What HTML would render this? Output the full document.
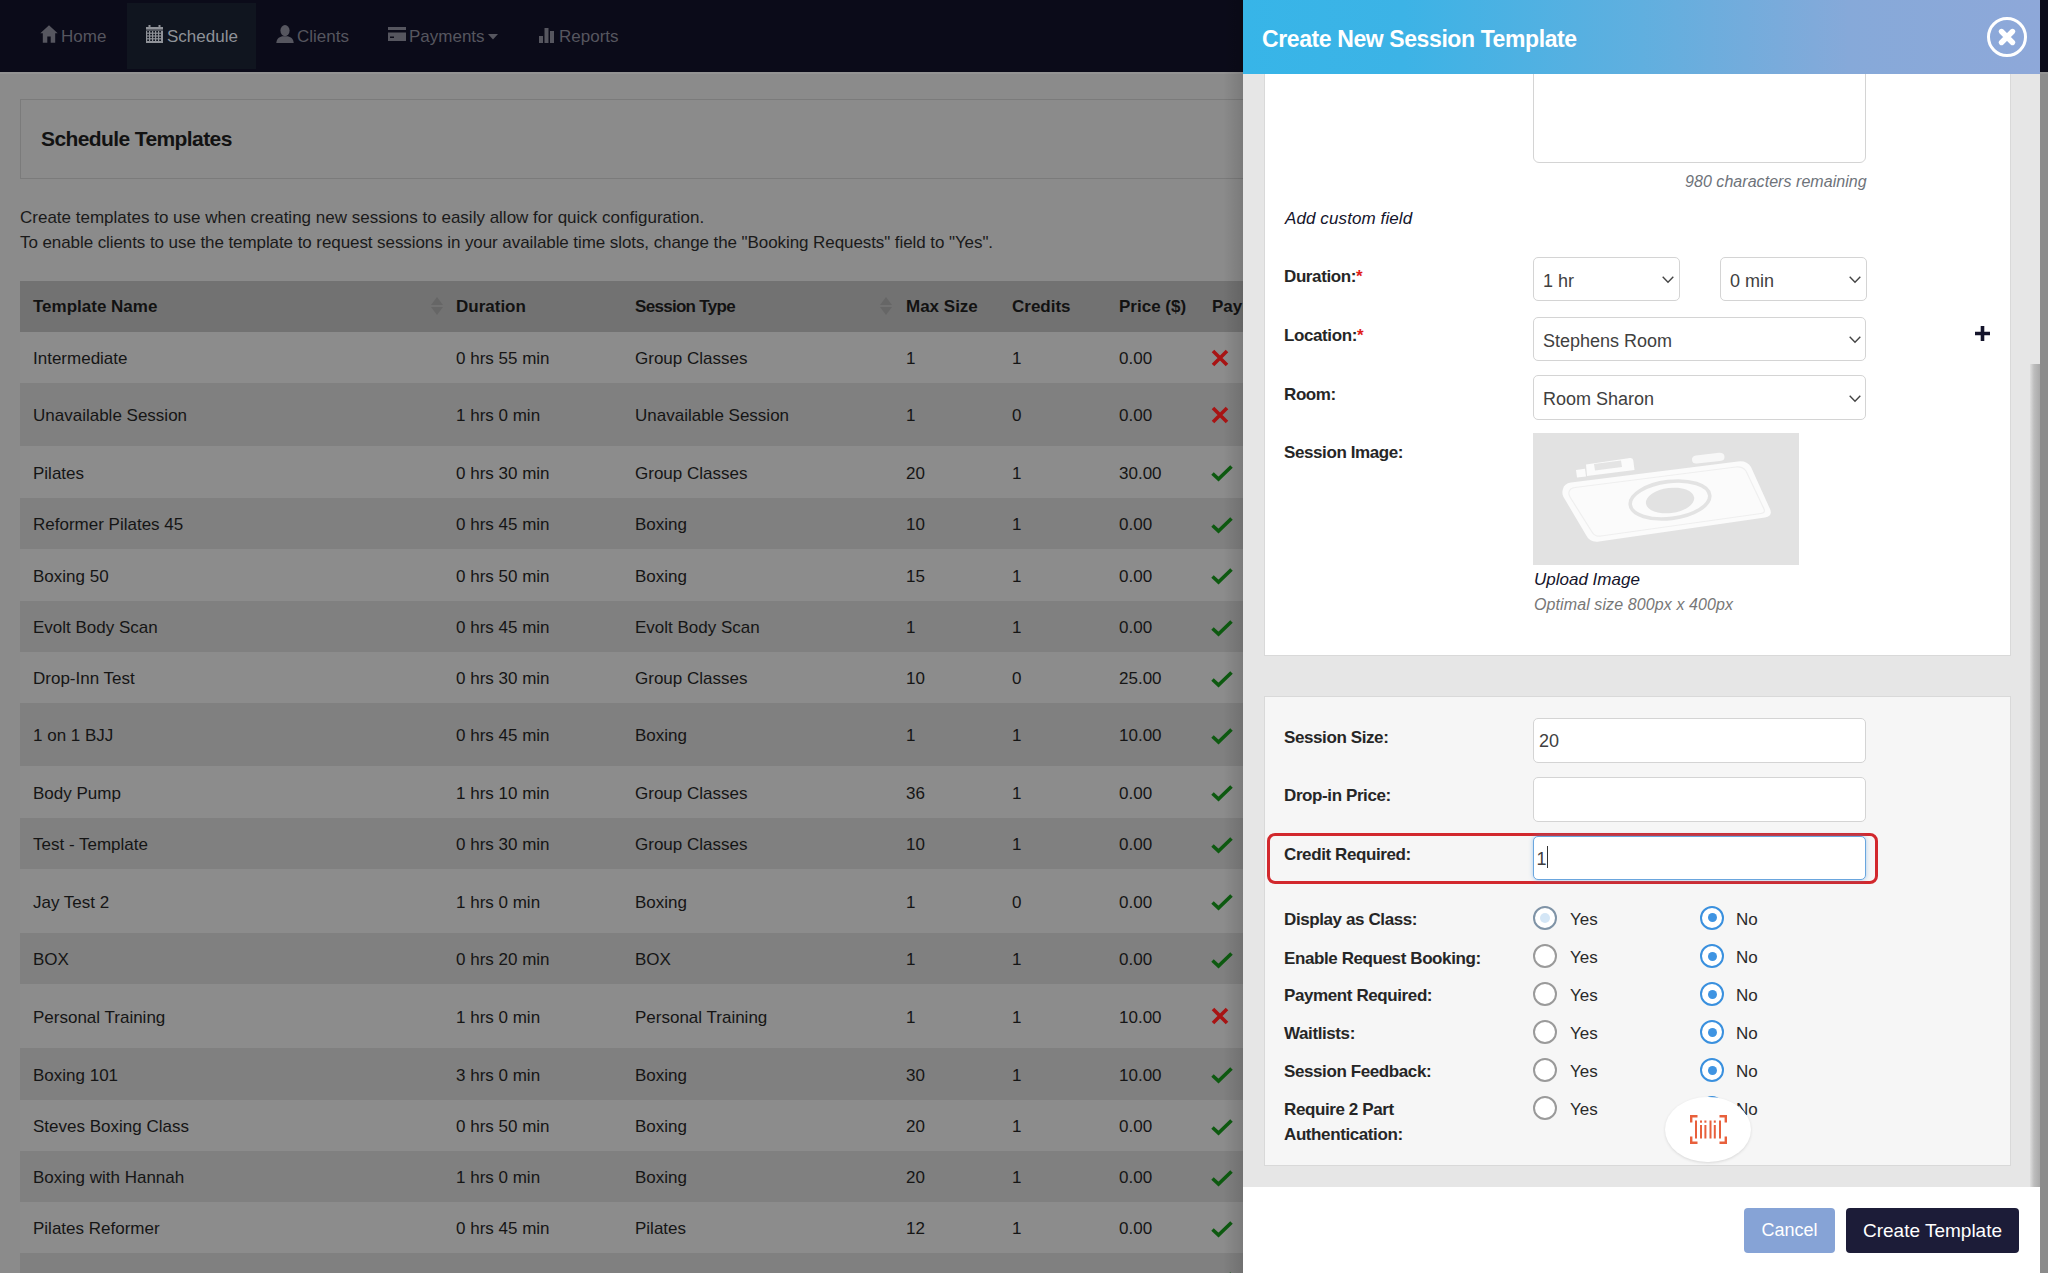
<!DOCTYPE html>
<html><head><meta charset="utf-8"><style>
*{box-sizing:border-box;margin:0;padding:0}
html,body{width:2048px;height:1273px;overflow:hidden;background:#8b8b8b;font-family:"Liberation Sans",sans-serif;position:relative}
.a,.td,.ni,.lbl,.val,.it{position:absolute;white-space:nowrap}
#nav{position:absolute;left:0;top:0;width:2048px;height:72px;background:#0b0b19}
#navact{position:absolute;left:127px;top:3px;width:129px;height:66px;background:#10151f}
#navline{position:absolute;left:0;top:72px;width:2048px;height:2px;background:#939393}
.ni{font-size:17px;line-height:20px;color:#56565f}
.ni.act{color:#8f9298}
.nic{position:absolute}
#panel{position:absolute;left:20px;top:99px;width:1240px;height:80px;border:1px solid #7b7b7b;border-right:none}
.title{font-size:21px;font-weight:bold;line-height:26px;color:#121212;letter-spacing:-0.6px}
.desc{font-size:17px;line-height:20px;color:#1a1a1a}
.trow{position:absolute;left:20px;width:1230px}
.hdr{background:#727272}
.lt{background:#8c8c8c}
.dk{background:#808080}
.td{font-size:17px;line-height:20px;color:#151515}
.th{font-weight:bold;color:#121212}
.sort{position:absolute;width:12px;height:20px}
.sort:before{content:"";position:absolute;left:0;top:0;border-left:6px solid transparent;border-right:6px solid transparent;border-bottom:8px solid #666}
.sort:after{content:"";position:absolute;left:0;top:10px;border-left:6px solid transparent;border-right:6px solid transparent;border-top:8px solid #666}
.ic{position:absolute}
#shadow{position:absolute;left:1223px;top:0;width:20px;height:1273px;background:linear-gradient(90deg,rgba(0,0,0,0),rgba(0,0,0,0.12))}
#modal{position:absolute;left:1243px;top:0;width:797px;height:1273px;background:#e6e6e6;overflow:hidden}
#mhead{position:absolute;left:0;top:0;width:797px;height:74px;background:linear-gradient(90deg,#37b5e8 0%,#3cb3e6 20%,#60afdf 50%,#86a9d9 76%,#8ea8d9 100%)}
#mtitle{position:absolute;left:19px;top:24.5px;font-size:23px;line-height:28px;font-weight:bold;color:#fff;letter-spacing:-0.4px;white-space:nowrap}
#mfoot{position:absolute;left:0;top:1187px;width:797px;height:86px;background:#fff}
.card{position:absolute;left:21px;width:747px}
.lbl{left:41px;font-size:17px;line-height:20px;font-weight:bold;color:#262626;letter-spacing:-0.4px}
.req{color:#e0201a}
.inp{position:absolute;left:290px;width:333px;height:45px;background:#fff;border:1px solid #d4d4d4;border-radius:5px}
.val{font-size:18px;line-height:22px;color:#404040}
.it{font-style:italic;font-size:16px;line-height:20px}
.chev{position:absolute}
.radio{position:absolute;width:24px;height:24px;border-radius:50%;border:2px solid #9a9a9a;background:#fff}
.radio.on{border:2.5px solid #3a90de}
.radio.on:after{content:"";position:absolute;left:50%;top:50%;width:9px;height:9px;margin:-4.5px 0 0 -4.5px;border-radius:50%;background:#3f94e2}
.rl{position:absolute;font-size:17px;line-height:20px;color:#2a2a2a;white-space:nowrap}
.btn{position:absolute;top:1208px;height:45px;border-radius:4px;color:#fff;font-size:19px;line-height:45px;text-align:center;white-space:nowrap}
.radio.pale{border:2.5px solid #7f93a6}
.radio.pale:after{content:"";position:absolute;left:50%;top:50%;width:10px;height:10px;margin:-5px 0 0 -5px;border-radius:50%;background:#d4e6f6}
</style></head><body>
<div id="navline"></div><div id="nav"><div id="navact"></div>
<svg class="nic" style="left:40px;top:25px" width="18" height="18" viewBox="0 0 18 18"><path d="M9 0.3L0.3 8.3H2.8V17.7H7.3V11.5H10.7V17.7H15.2V8.3H17.7Z" fill="#56565f"/></svg>
<div class="ni" style="left:61px;top:26.5px">Home</div>
<svg class="nic" style="left:146px;top:25px" width="17" height="18" viewBox="0 0 17 18"><rect x="0" y="2" width="17" height="16" fill="#8f9298"/><rect x="2.5" y="0" width="2" height="3" fill="#8f9298"/><rect x="12.5" y="0" width="2" height="3" fill="#8f9298"/><g fill="#10151f"><rect x="0" y="4.6" width="17" height="0.9"/><rect x="1.2" y="6.0" width="1.8" height="1.6"/><rect x="4.2" y="6.0" width="1.8" height="1.6"/><rect x="7.2" y="6.0" width="1.8" height="1.6"/><rect x="10.2" y="6.0" width="1.8" height="1.6"/><rect x="13.2" y="6.0" width="1.8" height="1.6"/><rect x="1.2" y="8.8" width="1.8" height="1.6"/><rect x="4.2" y="8.8" width="1.8" height="1.6"/><rect x="7.2" y="8.8" width="1.8" height="1.6"/><rect x="10.2" y="8.8" width="1.8" height="1.6"/><rect x="13.2" y="8.8" width="1.8" height="1.6"/><rect x="1.2" y="11.6" width="1.8" height="1.6"/><rect x="4.2" y="11.6" width="1.8" height="1.6"/><rect x="7.2" y="11.6" width="1.8" height="1.6"/><rect x="10.2" y="11.6" width="1.8" height="1.6"/><rect x="13.2" y="11.6" width="1.8" height="1.6"/><rect x="1.2" y="14.4" width="1.8" height="1.6"/><rect x="4.2" y="14.4" width="1.8" height="1.6"/><rect x="7.2" y="14.4" width="1.8" height="1.6"/><rect x="10.2" y="14.4" width="1.8" height="1.6"/><rect x="13.2" y="14.4" width="1.8" height="1.6"/></g></svg>
<div class="ni act" style="left:167px;top:26.5px">Schedule</div>
<svg class="nic" style="left:276px;top:25px" width="18" height="18" viewBox="0 0 18 18"><ellipse cx="9" cy="5.6" rx="4.6" ry="5.6" fill="#56565f"/><path d="M0.3 18C0.6 14 2.5 12.3 6.2 11.2H11.8C15.5 12.3 17.4 14 17.7 18Z" fill="#56565f"/></svg>
<div class="ni" style="left:297px;top:26.5px">Clients</div>
<svg class="nic" style="left:388px;top:27px" width="18" height="15" viewBox="0 0 18 15"><rect x="0" y="0" width="18" height="14" fill="#56565f"/><rect x="0" y="3" width="18" height="2.5" fill="#0b0b19"/><rect x="2" y="9.5" width="4" height="1.5" fill="#0b0b19"/></svg>
<div class="ni" style="left:409px;top:26.5px">Payments</div>
<svg class="nic" style="left:488px;top:34px" width="10" height="6" viewBox="0 0 10 6"><path d="M0 0H10L5 5.5Z" fill="#56565f"/></svg>
<svg class="nic" style="left:539px;top:27px" width="17" height="16" viewBox="0 0 17 16"><rect x="0" y="9" width="4" height="7" fill="#56565f"/><rect x="5.5" y="1" width="4" height="15" fill="#56565f"/><rect x="11" y="4" width="4" height="12" fill="#56565f"/></svg>
<div class="ni" style="left:559px;top:26.5px">Reports</div>
</div>
<div id="panel"></div>
<div class="a title" style="left:41px;top:125.5px;">Schedule Templates</div>
<div class="a desc" style="left:20px;top:207.5px;">Create templates to use when creating new sessions to easily allow for quick configuration.</div>
<div class="a desc" style="left:20px;top:232.5px;letter-spacing:-0.08px">To enable clients to use the template to request sessions in your available time slots, change the "Booking Requests" field to "Yes".</div>
<div class="trow hdr" style="top:281px;height:51px"></div>
<div class="td th" style="left:33px;top:296.5px;">Template Name</div>
<div class="td th" style="left:456px;top:296.5px;">Duration</div>
<div class="td th" style="left:635px;top:296.5px;letter-spacing:-0.7px">Session Type</div>
<div class="td th" style="left:906px;top:296.5px;">Max Size</div>
<div class="td th" style="left:1012px;top:296.5px;">Credits</div>
<div class="td th" style="left:1119px;top:296.5px;">Price ($)</div>
<div class="td th" style="left:1212px;top:296.5px;">Payment</div>
<div class="sort" style="left:431px;top:297px"></div>
<div class="sort" style="left:880px;top:297px"></div>
<div class="trow lt" style="top:332px;height:51px"></div>
<div class="td" style="left:33px;top:349.0px;">Intermediate</div>
<div class="td" style="left:456px;top:349.0px;">0 hrs 55 min</div>
<div class="td" style="left:635px;top:349.0px;">Group Classes</div>
<div class="td" style="left:906px;top:349.0px;">1</div>
<div class="td" style="left:1012px;top:349.0px;">1</div>
<div class="td" style="left:1119px;top:349.0px;">0.00</div>
<svg class="ic" style="left:1211px;top:349px" width="18" height="18" viewBox="0 0 18 18"><path d="M2 2L16 16M16 2L2 16" stroke="#a81414" stroke-width="3.6" stroke-linecap="butt"/></svg>
<div class="trow dk" style="top:383px;height:63px"></div>
<div class="td" style="left:33px;top:406.0px;">Unavailable Session</div>
<div class="td" style="left:456px;top:406.0px;">1 hrs 0 min</div>
<div class="td" style="left:635px;top:406.0px;">Unavailable Session</div>
<div class="td" style="left:906px;top:406.0px;">1</div>
<div class="td" style="left:1012px;top:406.0px;">0</div>
<div class="td" style="left:1119px;top:406.0px;">0.00</div>
<svg class="ic" style="left:1211px;top:406px" width="18" height="18" viewBox="0 0 18 18"><path d="M2 2L16 16M16 2L2 16" stroke="#a81414" stroke-width="3.6" stroke-linecap="butt"/></svg>
<div class="trow lt" style="top:446px;height:52px"></div>
<div class="td" style="left:33px;top:463.5px;">Pilates</div>
<div class="td" style="left:456px;top:463.5px;">0 hrs 30 min</div>
<div class="td" style="left:635px;top:463.5px;">Group Classes</div>
<div class="td" style="left:906px;top:463.5px;">20</div>
<div class="td" style="left:1012px;top:463.5px;">1</div>
<div class="td" style="left:1119px;top:463.5px;">30.00</div>
<svg class="ic" style="left:1211px;top:464px" width="22" height="18" viewBox="0 0 22 18"><path d="M1.5 9.5L7.5 15L20.5 2.5" fill="none" stroke="#0d5a10" stroke-width="3.6"/></svg>
<div class="trow dk" style="top:498px;height:51px"></div>
<div class="td" style="left:33px;top:515.0px;">Reformer Pilates 45</div>
<div class="td" style="left:456px;top:515.0px;">0 hrs 45 min</div>
<div class="td" style="left:635px;top:515.0px;">Boxing</div>
<div class="td" style="left:906px;top:515.0px;">10</div>
<div class="td" style="left:1012px;top:515.0px;">1</div>
<div class="td" style="left:1119px;top:515.0px;">0.00</div>
<svg class="ic" style="left:1211px;top:516px" width="22" height="18" viewBox="0 0 22 18"><path d="M1.5 9.5L7.5 15L20.5 2.5" fill="none" stroke="#0d5a10" stroke-width="3.6"/></svg>
<div class="trow lt" style="top:549px;height:52px"></div>
<div class="td" style="left:33px;top:566.5px;">Boxing 50</div>
<div class="td" style="left:456px;top:566.5px;">0 hrs 50 min</div>
<div class="td" style="left:635px;top:566.5px;">Boxing</div>
<div class="td" style="left:906px;top:566.5px;">15</div>
<div class="td" style="left:1012px;top:566.5px;">1</div>
<div class="td" style="left:1119px;top:566.5px;">0.00</div>
<svg class="ic" style="left:1211px;top:567px" width="22" height="18" viewBox="0 0 22 18"><path d="M1.5 9.5L7.5 15L20.5 2.5" fill="none" stroke="#0d5a10" stroke-width="3.6"/></svg>
<div class="trow dk" style="top:601px;height:51px"></div>
<div class="td" style="left:33px;top:618.0px;">Evolt Body Scan</div>
<div class="td" style="left:456px;top:618.0px;">0 hrs 45 min</div>
<div class="td" style="left:635px;top:618.0px;">Evolt Body Scan</div>
<div class="td" style="left:906px;top:618.0px;">1</div>
<div class="td" style="left:1012px;top:618.0px;">1</div>
<div class="td" style="left:1119px;top:618.0px;">0.00</div>
<svg class="ic" style="left:1211px;top:619px" width="22" height="18" viewBox="0 0 22 18"><path d="M1.5 9.5L7.5 15L20.5 2.5" fill="none" stroke="#0d5a10" stroke-width="3.6"/></svg>
<div class="trow lt" style="top:652px;height:51px"></div>
<div class="td" style="left:33px;top:669.0px;">Drop-Inn Test</div>
<div class="td" style="left:456px;top:669.0px;">0 hrs 30 min</div>
<div class="td" style="left:635px;top:669.0px;">Group Classes</div>
<div class="td" style="left:906px;top:669.0px;">10</div>
<div class="td" style="left:1012px;top:669.0px;">0</div>
<div class="td" style="left:1119px;top:669.0px;">25.00</div>
<svg class="ic" style="left:1211px;top:670px" width="22" height="18" viewBox="0 0 22 18"><path d="M1.5 9.5L7.5 15L20.5 2.5" fill="none" stroke="#0d5a10" stroke-width="3.6"/></svg>
<div class="trow dk" style="top:703px;height:63px"></div>
<div class="td" style="left:33px;top:726.0px;">1 on 1 BJJ</div>
<div class="td" style="left:456px;top:726.0px;">0 hrs 45 min</div>
<div class="td" style="left:635px;top:726.0px;">Boxing</div>
<div class="td" style="left:906px;top:726.0px;">1</div>
<div class="td" style="left:1012px;top:726.0px;">1</div>
<div class="td" style="left:1119px;top:726.0px;">10.00</div>
<svg class="ic" style="left:1211px;top:727px" width="22" height="18" viewBox="0 0 22 18"><path d="M1.5 9.5L7.5 15L20.5 2.5" fill="none" stroke="#0d5a10" stroke-width="3.6"/></svg>
<div class="trow lt" style="top:766px;height:52px"></div>
<div class="td" style="left:33px;top:783.5px;">Body Pump</div>
<div class="td" style="left:456px;top:783.5px;">1 hrs 10 min</div>
<div class="td" style="left:635px;top:783.5px;">Group Classes</div>
<div class="td" style="left:906px;top:783.5px;">36</div>
<div class="td" style="left:1012px;top:783.5px;">1</div>
<div class="td" style="left:1119px;top:783.5px;">0.00</div>
<svg class="ic" style="left:1211px;top:784px" width="22" height="18" viewBox="0 0 22 18"><path d="M1.5 9.5L7.5 15L20.5 2.5" fill="none" stroke="#0d5a10" stroke-width="3.6"/></svg>
<div class="trow dk" style="top:818px;height:51px"></div>
<div class="td" style="left:33px;top:835.0px;">Test - Template</div>
<div class="td" style="left:456px;top:835.0px;">0 hrs 30 min</div>
<div class="td" style="left:635px;top:835.0px;">Group Classes</div>
<div class="td" style="left:906px;top:835.0px;">10</div>
<div class="td" style="left:1012px;top:835.0px;">1</div>
<div class="td" style="left:1119px;top:835.0px;">0.00</div>
<svg class="ic" style="left:1211px;top:836px" width="22" height="18" viewBox="0 0 22 18"><path d="M1.5 9.5L7.5 15L20.5 2.5" fill="none" stroke="#0d5a10" stroke-width="3.6"/></svg>
<div class="trow lt" style="top:869px;height:64px"></div>
<div class="td" style="left:33px;top:892.5px;">Jay Test 2</div>
<div class="td" style="left:456px;top:892.5px;">1 hrs 0 min</div>
<div class="td" style="left:635px;top:892.5px;">Boxing</div>
<div class="td" style="left:906px;top:892.5px;">1</div>
<div class="td" style="left:1012px;top:892.5px;">0</div>
<div class="td" style="left:1119px;top:892.5px;">0.00</div>
<svg class="ic" style="left:1211px;top:893px" width="22" height="18" viewBox="0 0 22 18"><path d="M1.5 9.5L7.5 15L20.5 2.5" fill="none" stroke="#0d5a10" stroke-width="3.6"/></svg>
<div class="trow dk" style="top:933px;height:51px"></div>
<div class="td" style="left:33px;top:950.0px;">BOX</div>
<div class="td" style="left:456px;top:950.0px;">0 hrs 20 min</div>
<div class="td" style="left:635px;top:950.0px;">BOX</div>
<div class="td" style="left:906px;top:950.0px;">1</div>
<div class="td" style="left:1012px;top:950.0px;">1</div>
<div class="td" style="left:1119px;top:950.0px;">0.00</div>
<svg class="ic" style="left:1211px;top:951px" width="22" height="18" viewBox="0 0 22 18"><path d="M1.5 9.5L7.5 15L20.5 2.5" fill="none" stroke="#0d5a10" stroke-width="3.6"/></svg>
<div class="trow lt" style="top:984px;height:64px"></div>
<div class="td" style="left:33px;top:1007.5px;">Personal Training</div>
<div class="td" style="left:456px;top:1007.5px;">1 hrs 0 min</div>
<div class="td" style="left:635px;top:1007.5px;">Personal Training</div>
<div class="td" style="left:906px;top:1007.5px;">1</div>
<div class="td" style="left:1012px;top:1007.5px;">1</div>
<div class="td" style="left:1119px;top:1007.5px;">10.00</div>
<svg class="ic" style="left:1211px;top:1007px" width="18" height="18" viewBox="0 0 18 18"><path d="M2 2L16 16M16 2L2 16" stroke="#a81414" stroke-width="3.6" stroke-linecap="butt"/></svg>
<div class="trow dk" style="top:1048px;height:52px"></div>
<div class="td" style="left:33px;top:1065.5px;">Boxing 101</div>
<div class="td" style="left:456px;top:1065.5px;">3 hrs 0 min</div>
<div class="td" style="left:635px;top:1065.5px;">Boxing</div>
<div class="td" style="left:906px;top:1065.5px;">30</div>
<div class="td" style="left:1012px;top:1065.5px;">1</div>
<div class="td" style="left:1119px;top:1065.5px;">10.00</div>
<svg class="ic" style="left:1211px;top:1066px" width="22" height="18" viewBox="0 0 22 18"><path d="M1.5 9.5L7.5 15L20.5 2.5" fill="none" stroke="#0d5a10" stroke-width="3.6"/></svg>
<div class="trow lt" style="top:1100px;height:51px"></div>
<div class="td" style="left:33px;top:1117.0px;">Steves Boxing Class</div>
<div class="td" style="left:456px;top:1117.0px;">0 hrs 50 min</div>
<div class="td" style="left:635px;top:1117.0px;">Boxing</div>
<div class="td" style="left:906px;top:1117.0px;">20</div>
<div class="td" style="left:1012px;top:1117.0px;">1</div>
<div class="td" style="left:1119px;top:1117.0px;">0.00</div>
<svg class="ic" style="left:1211px;top:1118px" width="22" height="18" viewBox="0 0 22 18"><path d="M1.5 9.5L7.5 15L20.5 2.5" fill="none" stroke="#0d5a10" stroke-width="3.6"/></svg>
<div class="trow dk" style="top:1151px;height:51px"></div>
<div class="td" style="left:33px;top:1168.0px;">Boxing with Hannah</div>
<div class="td" style="left:456px;top:1168.0px;">1 hrs 0 min</div>
<div class="td" style="left:635px;top:1168.0px;">Boxing</div>
<div class="td" style="left:906px;top:1168.0px;">20</div>
<div class="td" style="left:1012px;top:1168.0px;">1</div>
<div class="td" style="left:1119px;top:1168.0px;">0.00</div>
<svg class="ic" style="left:1211px;top:1169px" width="22" height="18" viewBox="0 0 22 18"><path d="M1.5 9.5L7.5 15L20.5 2.5" fill="none" stroke="#0d5a10" stroke-width="3.6"/></svg>
<div class="trow lt" style="top:1202px;height:51px"></div>
<div class="td" style="left:33px;top:1219.0px;">Pilates Reformer</div>
<div class="td" style="left:456px;top:1219.0px;">0 hrs 45 min</div>
<div class="td" style="left:635px;top:1219.0px;">Pilates</div>
<div class="td" style="left:906px;top:1219.0px;">12</div>
<div class="td" style="left:1012px;top:1219.0px;">1</div>
<div class="td" style="left:1119px;top:1219.0px;">0.00</div>
<svg class="ic" style="left:1211px;top:1220px" width="22" height="18" viewBox="0 0 22 18"><path d="M1.5 9.5L7.5 15L20.5 2.5" fill="none" stroke="#0d5a10" stroke-width="3.6"/></svg>
<div class="trow dk" style="top:1253px;height:63px"></div>
<div class="td" style="left:33px;top:1270.0px;">Hannah Boxing 45</div>
<div class="td" style="left:456px;top:1270.0px;">0 hrs 45 min</div>
<div class="td" style="left:635px;top:1270.0px;">Boxing</div>
<div class="td" style="left:906px;top:1270.0px;">11</div>
<div class="td" style="left:1012px;top:1270.0px;">1</div>
<div class="td" style="left:1119px;top:1270.0px;">0.00</div>
<svg class="ic" style="left:1211px;top:1271px" width="22" height="18" viewBox="0 0 22 18"><path d="M1.5 9.5L7.5 15L20.5 2.5" fill="none" stroke="#0d5a10" stroke-width="3.6"/></svg>
<div id="shadow"></div>
<div id="modal">
 <div class="card" style="top:-20px;height:676px;background:#fff;border:1px solid #d9d9d9"></div>
 <div class="card" style="top:696px;height:470px;background:#f6f6f6;border:1px solid #d9d9d9"></div>
 <div id="sbar" style="position:absolute;left:787px;top:364px;width:10px;height:823px;background:linear-gradient(90deg,#dedede 0%,#bdbdbd 40%,#a9a9a9 100%)"></div>
 <!-- textarea -->
 <div class="inp" style="top:40px;height:123px;border-radius:0 0 6px 6px"></div>
 <div class="it" style="left:442px;top:171.6px;color:#6e737a;font-size:16px;letter-spacing:0.05px">980 characters remaining</div>
 <div class="it" style="left:42px;top:209.1px;color:#14142b;font-size:17px;letter-spacing:0.1px">Add custom field</div>
 <!-- duration -->
 <div class="lbl" style="top:266.7px">Duration:<span class="req">*</span></div>
 <div class="inp" style="top:257px;width:147px;height:44px"></div>
 <div class="val" style="left:300px;top:270.0px">1 hr</div>
 <svg class="chev" style="left:419px;top:275.5px" width="12" height="8" viewBox="0 0 12 8"><path d="M0.7 0.8L6 6.3L11.3 0.8" fill="none" stroke="#444" stroke-width="1.4"/></svg>
 <div class="inp" style="left:477px;top:257px;width:147px;height:44px"></div>
 <div class="val" style="left:487px;top:270.0px">0 min</div>
 <svg class="chev" style="left:606px;top:275.5px" width="12" height="8" viewBox="0 0 12 8"><path d="M0.7 0.8L6 6.3L11.3 0.8" fill="none" stroke="#444" stroke-width="1.4"/></svg>
 <!-- location -->
 <div class="lbl" style="top:326.4px">Location:<span class="req">*</span></div>
 <div class="inp" style="top:317px;height:44px"></div>
 <div class="val" style="left:300px;top:329.5px">Stephens Room</div>
 <svg class="chev" style="left:606px;top:335.5px" width="12" height="8" viewBox="0 0 12 8"><path d="M0.7 0.8L6 6.3L11.3 0.8" fill="none" stroke="#444" stroke-width="1.4"/></svg>
 <svg style="position:absolute;left:731px;top:325px" width="17" height="17" viewBox="0 0 17 17"><path d="M8.5 1V16M1 8.5H16" stroke="#14142b" stroke-width="3.6"/></svg>
 <!-- room -->
 <div class="lbl" style="top:385.2px">Room:</div>
 <div class="inp" style="top:375px;height:45px"></div>
 <div class="val" style="left:300px;top:388.0px">Room Sharon</div>
 <svg class="chev" style="left:606px;top:394.5px" width="12" height="8" viewBox="0 0 12 8"><path d="M0.7 0.8L6 6.3L11.3 0.8" fill="none" stroke="#444" stroke-width="1.4"/></svg>
 <!-- session image -->
 <div class="lbl" style="top:443.3px">Session Image:</div>
 <svg style="position:absolute;left:290px;top:433px" width="266" height="132" viewBox="0 0 266 132">
  <rect x="0" y="0" width="266" height="132" fill="#e2e2e2"/>
  <path d="M53 31.6L97 25Q100 24.6 100.3 27.5L101.5 37L54 43Z" fill="#fbfbfb"/>
  <path d="M61 31L88 27.5L89 34L62 37.5Z" fill="#e4e4e4"/>
  <path d="M43 37L52 35.8L53 43.5L44 44.5Z" fill="#fbfbfb"/>
  <path d="M163 22.5L186 19.8Q191 19.5 191.5 23.5Q192 27.5 187 28L164 30.5Q159.5 31 159 27Q158.7 23 163 22.5Z" fill="#f7f7f7"/>
  <path d="M30 56Q31 50.5 38 49.5L205 28.5Q214 27.5 218 34L237 76Q240 83 232 84.5L66 108.5Q57 110 53 102L30.5 64Q28.5 60 30 56Z" fill="#fbfbfb"/>
  <path d="M36 59Q37 55 42 54.5L203 34Q210 33.5 213 38L231 76Q232.5 80 228 80.5L68 103Q62 104 59 99L37 64Q35.5 61.5 36 59Z" fill="none" stroke="#efefef" stroke-width="1.2"/>
  <g transform="rotate(-7 137 67)">
   <ellipse cx="137" cy="67" rx="40" ry="18.5" fill="none" stroke="#e3e3e3" stroke-width="3.6"/>
   <ellipse cx="137" cy="67.5" rx="24.3" ry="12.6" fill="#e2e2e2"/>
  </g>
 </svg>
 <div class="it" style="left:291px;top:570.3px;color:#14142b;font-size:17px">Upload Image</div>
 <div class="it" style="left:291px;top:595.1px;color:#777;font-size:16px;letter-spacing:0.1px">Optimal size 800px x 400px</div>
 <!-- card 2 -->
 <div class="lbl" style="top:728.1px">Session Size:</div>
 <div class="inp" style="top:718px;height:45px"></div>
 <div class="val" style="left:296px;top:730.0px">20</div>
 <div class="lbl" style="top:786.1px">Drop-in Price:</div>
 <div class="inp" style="top:777px;height:45px"></div>
 <div style="position:absolute;left:24px;top:833px;width:611px;height:51px;border:3px solid #d2282d;border-radius:8px"></div>
 <div class="lbl" style="top:844.7px">Credit Required:</div>
 <div class="inp" style="top:835.5px;height:44px;border:1.5px solid #6aa6de;box-shadow:0 0 4px rgba(90,160,230,0.5)"></div>
 <div class="val" style="left:293.5px;top:848px">1</div>
 <div style="position:absolute;left:303.5px;top:846px;width:1.3px;height:22px;background:#333"></div>
 <div class="lbl" style="top:910.4px">Display as Class:</div>
 <div class="radio pale" style="left:290px;top:905.7px"></div>
 <div class="rl" style="left:327px;top:909.5px">Yes</div>
 <div class="radio on" style="left:457px;top:905.7px"></div>
 <div class="rl" style="left:493px;top:909.5px">No</div>
 <div class="lbl" style="top:948.8px">Enable Request Booking:</div>
 <div class="radio" style="left:290px;top:944.2px"></div>
 <div class="rl" style="left:327px;top:948.0px">Yes</div>
 <div class="radio on" style="left:457px;top:944.2px"></div>
 <div class="rl" style="left:493px;top:948.0px">No</div>
 <div class="lbl" style="top:986.4px">Payment Required:</div>
 <div class="radio" style="left:290px;top:982.2px"></div>
 <div class="rl" style="left:327px;top:986.0px">Yes</div>
 <div class="radio on" style="left:457px;top:982.2px"></div>
 <div class="rl" style="left:493px;top:986.0px">No</div>
 <div class="lbl" style="top:1024.3px">Waitlists:</div>
 <div class="radio" style="left:290px;top:1020.2px"></div>
 <div class="rl" style="left:327px;top:1024.0px">Yes</div>
 <div class="radio on" style="left:457px;top:1020.2px"></div>
 <div class="rl" style="left:493px;top:1024.0px">No</div>
 <div class="lbl" style="top:1062.1px">Session Feedback:</div>
 <div class="radio" style="left:290px;top:1058.2px"></div>
 <div class="rl" style="left:327px;top:1062.0px">Yes</div>
 <div class="radio on" style="left:457px;top:1058.2px"></div>
 <div class="rl" style="left:493px;top:1062.0px">No</div>
 <div class="lbl" style="top:1100.3px">Require 2 Part</div>
 <div class="radio" style="left:290px;top:1096.2px"></div>
 <div class="rl" style="left:327px;top:1100.0px">Yes</div>
 <div class="radio on" style="left:457px;top:1096.2px"></div>
 <div class="rl" style="left:493px;top:1100.0px">No</div>
 <div class="lbl" style="top:1124.9px">Authentication:</div>
 <div id="fab" style="position:absolute;left:422px;top:1097px;width:86px;height:65px;border-radius:43px/33px;background:#fff;box-shadow:0 1px 3px rgba(0,0,0,0.12)"></div>
 <svg style="position:absolute;left:447px;top:1115px" width="37" height="29" viewBox="0 0 37 29"><g fill="none" stroke="#e8603c" stroke-width="2.4"><path d="M7.5 1.2H1.2V7.5M29.5 1.2H35.8V7.5M7.5 27.8H1.2V21.5M29.5 27.8H35.8V21.5"/></g><g stroke="#e8603c" stroke-width="2"><path d="M6 5.5V23.5M20.5 5.5V23.5M30 5.5V23.5"/><path d="M11 10V23.5M15.4 10V23.5M24.8 10V23.5"/></g><g fill="#e8603c"><rect x="10" y="5.5" width="2" height="2.2"/><rect x="14.4" y="5.5" width="2" height="2.2"/><rect x="23.8" y="5.5" width="2" height="2.2"/></g></svg>
 <div id="mfoot"></div>
 <div class="btn" style="left:501px;width:91px;background:#86a3d6;font-size:18px">Cancel</div>
 <div class="btn" style="left:603px;width:173px;background:#1c1c38">Create Template</div>
 <div id="mhead">
  <div id="mtitle">Create New Session Template</div>
  <svg style="position:absolute;left:743px;top:16px" width="42" height="42" viewBox="0 0 42 42"><circle cx="21" cy="21" r="18.5" fill="none" stroke="#fff" stroke-width="3"/><path d="M15.5 15.5L26.5 26.5M26.5 15.5L15.5 26.5" stroke="#fff" stroke-width="5.4" stroke-linecap="round"/></svg>
 </div>
</div>
</body></html>
